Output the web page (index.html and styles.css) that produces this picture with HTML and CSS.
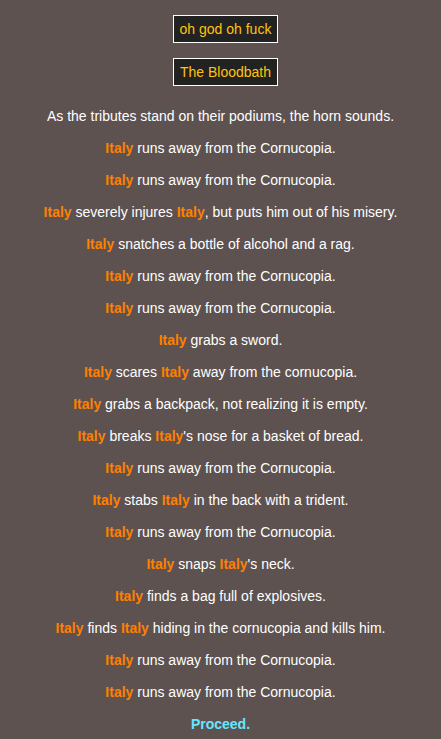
FILE: index.html
```html
<!DOCTYPE html>
<html>
<head>
<meta charset="utf-8">
<link rel="stylesheet" href="styles.css">
</head>
<body>
<div class="page">
  <div class="headers">
    <div class="box">oh god oh fuck</div>
    <div class="box">The Bloodbath</div>
  </div>
  <div class="events">
    <div class="line">As the tributes stand on their podiums, the horn sounds.</div>
    <div class="line"><b class="t">Italy</b> runs away from the Cornucopia.</div>
    <div class="line"><b class="t">Italy</b> runs away from the Cornucopia.</div>
    <div class="line"><b class="t">Italy</b> severely injures <b class="t">Italy</b>, but puts him out of his misery.</div>
    <div class="line"><b class="t">Italy</b> snatches a bottle of alcohol and a rag.</div>
    <div class="line"><b class="t">Italy</b> runs away from the Cornucopia.</div>
    <div class="line"><b class="t">Italy</b> runs away from the Cornucopia.</div>
    <div class="line"><b class="t">Italy</b> grabs a sword.</div>
    <div class="line"><b class="t">Italy</b> scares <b class="t">Italy</b> away from the cornucopia.</div>
    <div class="line"><b class="t">Italy</b> grabs a backpack, not realizing it is empty.</div>
    <div class="line"><b class="t">Italy</b> breaks <b class="t">Italy</b>'s nose for a basket of bread.</div>
    <div class="line"><b class="t">Italy</b> runs away from the Cornucopia.</div>
    <div class="line"><b class="t">Italy</b> stabs <b class="t">Italy</b> in the back with a trident.</div>
    <div class="line"><b class="t">Italy</b> runs away from the Cornucopia.</div>
    <div class="line"><b class="t">Italy</b> snaps <b class="t">Italy</b>'s neck.</div>
    <div class="line"><b class="t">Italy</b> finds a bag full of explosives.</div>
    <div class="line"><b class="t">Italy</b> finds <b class="t">Italy</b> hiding in the cornucopia and kills him.</div>
    <div class="line"><b class="t">Italy</b> runs away from the Cornucopia.</div>
    <div class="line"><b class="t">Italy</b> runs away from the Cornucopia.</div>
    <div class="line"><a class="proceed">Proceed.</a></div>
  </div>
</div>
</body>
</html>
```
FILE: styles.css
```css
html, body {
  margin: 0;
  padding: 0;
  background: #5d5250;
}
body {
  font-family: "Liberation Sans", Arial, sans-serif;
  font-size: 14px;
  color: #ffffff;
}
.page {
  padding-top: 15px;
  text-align: center;
}
.headers {
  display: flex;
  flex-direction: column;
  align-items: center;
  gap: 15px;
}
.box {
  background: #222222;
  border: 1px solid #ffffff;
  color: #ffc30f;
  padding: 5px 6px;
  line-height: 16px;
  margin-left: 10px;
}
.events {
  margin-top: 22px;
  display: flex;
  flex-direction: column;
  gap: 16px;
}
.line {
  line-height: 16px;
}
.t {
  color: #ff8000;
  font-weight: bold;
}
.proceed {
  color: #66e6ff;
  font-weight: bold;
}
```
